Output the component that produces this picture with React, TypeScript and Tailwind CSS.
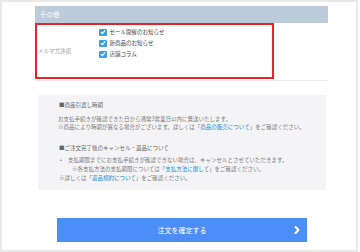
import { ChevronRight } from "lucide-react"

const options = ["セール開催のお知らせ", "新商品のお知らせ", "店舗コラム"]

function Check() {
  return (
    <span className="w-[7.5px] h-[7.5px] rounded-[1px] bg-[#3aa0dc] flex items-center justify-center shrink-0">
      <svg viewBox="0 0 10 10" className="w-[6px] h-[6px]">
        <polyline points="1.5,5.2 4,7.6 8.6,2.4" fill="none" stroke="#fff" strokeWidth="2" />
      </svg>
    </span>
  )
}

function Link({ children }: { children: React.ReactNode }) {
  return <span className="text-[#2c8ad3]">{children}</span>
}

export default function App() {
  return (
    <div
      className="w-[358px] h-[252px] border-2 border-[#e9e9e9] bg-white overflow-hidden"
      style={{ fontFamily: '"Noto Sans CJK JP", "Noto Sans", sans-serif' }}
    >
      <div className="ml-[33px] mt-[4px] w-[293px]">
        <div className="h-[17px] bg-[#bccbdb] flex items-center pl-[5px] text-[6.5px] text-white">その他</div>

        <div className="border-b border-[#ececec] pb-[1px]">
          <div className="w-[239px] h-[56px] border-2 border-[#e5232b] flex items-center">
            <div className="w-[62px] pl-[1px] text-[5.5px] text-[#9a9a9a] mt-[1px]">メルマガ許諾</div>
            <div className="self-start pt-[3.5px] flex flex-col gap-[3.5px]">
              {options.map((o) => (
                <div key={o} className="flex items-center gap-[3px] h-[7.5px] text-[5.5px] text-[#444]">
                  <Check />
                  <span>{o}</span>
                </div>
              ))}
            </div>
          </div>
        </div>

        <div className="ml-[3px] mt-[14px] w-[288px] h-[95px] bg-[#f4f4f6] pt-[6px] pl-[20px] text-[5.5px] leading-[8.5px] text-[#7a7a7a]">
          <p className="pl-[1px] text-[#666]">■商品引渡し時期</p>
          <p className="mt-[5px]">お支払手続きが確認できた日から通常3営業日以内に発送いたします。</p>
          <p>
            ※商品により時期が異なる場合がございます。詳しくは「<Link>商品の販売について</Link>」をご確認ください。
          </p>
          <p className="mt-[12.5px] pl-[1px] text-[#666]">■ご注文完了後のキャンセル・返品について</p>
          <div className="mt-[3.5px] flex pl-[2px]">
            <span className="w-[8px]">•</span>
            <div className="leading-[9px]">
              <p>支払期限までにお支払手続きが確認できない場合は、キャンセルとさせていただきます。</p>
              <p className="pl-[4px]">
                ※各支払方法の支払期限については「<Link>支払方法に関して</Link>」をご確認ください。
              </p>
            </div>
          </div>
          <p className="pl-[1px] leading-[9px]">
            ※詳しくは「<Link>返品規約について</Link>」をご確認ください。
          </p>
        </div>

        <button className="mt-[28px] ml-[22px] w-[250px] h-[24px] bg-[#4c8ef7] text-white text-[7px] flex items-center relative">
          <span className="flex-1 text-center">注文を確定する</span>
          <ChevronRight className="absolute right-[4px] w-[12px] h-[12px]" strokeWidth={4} />
        </button>
      </div>
    </div>
  )
}
